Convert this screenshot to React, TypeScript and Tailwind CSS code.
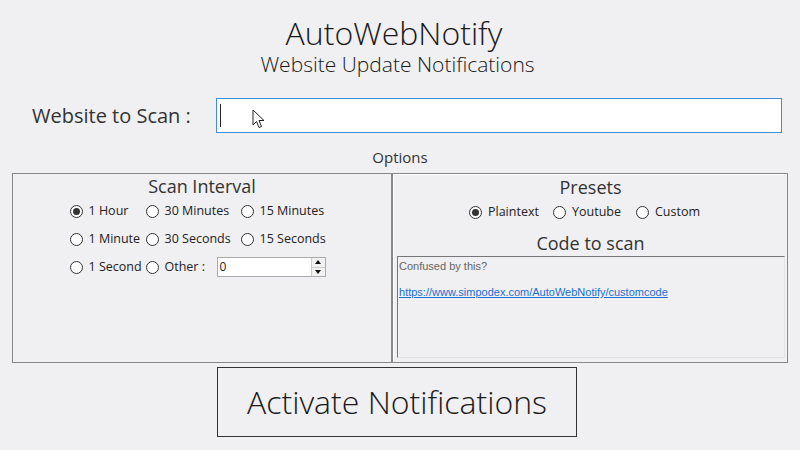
import React from "react";

const font = { fontFamily: '"Open Sans", "Noto Sans", sans-serif' };

function Radio({ label, checked, w }: { label: string; checked?: boolean; w: string }) {
  return (
    <div className={`flex items-center gap-[6px] ${w}`}>
      <span className="w-[13px] h-[13px] rounded-full border border-[#333] bg-white flex items-center justify-center shrink-0">
        {checked && <span className="w-[7px] h-[7px] rounded-full bg-[#333]" />}
      </span>
      <span className="text-[12.5px] leading-none text-[#222]">{label}</span>
    </div>
  );
}

export default function App() {
  return (
    <div className="relative w-[800px] h-[450px] bg-[#f0eff1] overflow-hidden" style={font}>
      <div className="flex flex-col items-center pt-[18px] text-[#1a1a1a]">
        <div className="text-[32px] leading-[30px] font-light mr-[12px]">AutoWebNotify</div>
        <div className="text-[21px] leading-[22px] font-light mt-[5px] mr-[5px]">Website Update Notifications</div>
      </div>

      <div className="flex items-center mt-[23px]">
        <div className="w-[216px] pl-[32px] text-[20px] text-[#333]">Website to Scan :</div>
        <div className="w-[566px] h-[35px] border border-[#3c8fd8] bg-white flex items-center pl-[3px]">
          <span className="w-px h-[23px] bg-[#222]" />
        </div>
      </div>

      <div className="text-center text-[15px] text-[#333] mt-[14px] leading-[20px]">Options</div>

      <div className="flex mx-[12px] mt-[6px] h-[190px]">
        <div className="w-[381px] border border-[#888] flex flex-col items-center">
          <div className="text-[18px] leading-[22px] text-[#333] mt-[1px]">Scan Interval</div>
          <div className="flex flex-col mr-[4px]">
            <div className="flex items-center h-[28px]">
              <Radio label="1 Hour" checked w="w-[76px]" />
              <Radio label="30 Minutes" w="w-[95px]" />
              <Radio label="15 Minutes" w="w-[90px]" />
            </div>
            <div className="flex items-center h-[28px]">
              <Radio label="1 Minute" w="w-[76px]" />
              <Radio label="30 Seconds" w="w-[95px]" />
              <Radio label="15 Seconds" w="w-[90px]" />
            </div>
            <div className="flex items-center h-[28px]">
              <Radio label="1 Second" w="w-[76px]" />
              <Radio label="Other :" w="w-[71px]" />
              <div className="w-[109px] h-[20px] bg-white border border-[#aaa] flex items-center justify-between pl-[2px]">
                <span className="text-[12px] text-[#222]">0</span>
                <div className="w-[14px] h-full border-l border-[#ccc] flex flex-col">
                  <div className="flex-1 bg-[#f2f2f2] border-b border-[#ccc] flex items-center justify-center">
                    <span className="w-0 h-0 border-l-[3px] border-r-[3px] border-b-[4px] border-l-transparent border-r-transparent border-b-[#111]" />
                  </div>
                  <div className="flex-1 bg-[#f2f2f2] flex items-center justify-center">
                    <span className="w-0 h-0 border-l-[3px] border-r-[3px] border-t-[4px] border-l-transparent border-r-transparent border-t-[#111]" />
                  </div>
                </div>
              </div>
            </div>
          </div>
        </div>

        <div className="w-[397px] border border-[#888] flex flex-col items-center">
          <div className="w-full h-full border-l border-t border-[#fff] flex flex-col items-center">
            <div className="text-[18px] leading-[22px] text-[#333] mt-[1px]">Presets</div>
            <div className="flex items-center h-[28px] mr-[16px]">
              <Radio label="Plaintext" checked w="w-[84px]" />
              <Radio label="Youtube" w="w-[83px]" />
              <Radio label="Custom" w="w-[60px]" />
            </div>
            <div className="text-[18px] leading-[22px] text-[#333] mt-[6px]">Code to scan</div>
            <div
              className="self-start ml-[3px] mt-[2px] w-[388px] h-[102px] border border-t-[#777] border-l-[#777] border-r-[#e4e4e4] border-b-[#e4e4e4] bg-[#f0eff1] px-[1px] text-[11px] leading-[13px]"
              style={{ fontFamily: '"Liberation Sans", Arial, sans-serif' }}
            >
              <div className="text-[#666] mt-[3px]">Confused by this?</div>
              <div className="text-[#1a6fd1] underline mt-[13px]">
                https://www.simpodex.com/AutoWebNotify/customcode
              </div>
            </div>
          </div>
        </div>
      </div>

      <div className="ml-[217px] mt-[4px] w-[360px] h-[70px] border border-[#333] flex items-center justify-center">
        <span className="text-[32px] font-light text-[#1a1a1a]">Activate Notifications</span>
      </div>

      <svg className="absolute left-[252px] top-[109px]" width="14" height="20" viewBox="0 0 14 20">
        <path d="M1 1 L1 16 L4.5 12.5 L7 18.5 L9.5 17.5 L7 11.5 L12 11.5 Z" fill="#fff" stroke="#222" strokeWidth="1" strokeLinejoin="round" />
      </svg>
    </div>
  );
}
